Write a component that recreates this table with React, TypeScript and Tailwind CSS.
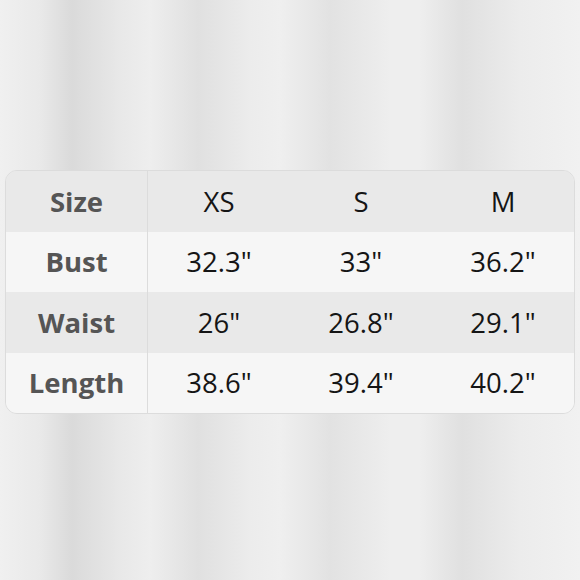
const rows = [
  { label: "Size", values: ["XS", "S", "M"] },
  { label: "Bust", values: ['32.3"', '33"', '36.2"'] },
  { label: "Waist", values: ['26"', '26.8"', '29.1"'] },
  { label: "Length", values: ['38.6"', '39.4"', '40.2"'] },
];

export default function App() {
  return (
    <div className="h-[580px] w-[580px] overflow-hidden bg-[linear-gradient(90deg,#f0f0f0_0px,#e9e9e9_40px,#dadada_72px,#e8e8e8_120px,#eeeeee_150px,#e0e0e0_198px,#ececec_250px,#efefef_280px,#e2e2e2_330px,#eeeeee_390px,#eeeeee_420px,#e0e0e0_462px,#ececec_520px,#f1f1f1_580px)] pt-[170px] font-['Open_Sans',sans-serif]">
      <div className="mx-auto w-[570px] overflow-hidden rounded-[12px] border border-[#dcdcdc]">
        {rows.map((row, i) => (
          <div
            key={row.label}
            className={`grid h-[60.5px] grid-cols-4 items-center text-[27.5px] leading-none ${i % 2 === 0 ? "bg-[#e9e9e9]" : "bg-[#f6f6f6]"}`}
          >
            <div className="flex h-full items-center justify-center border-r border-[#dcdcdc] font-bold text-[#555555]">
              {row.label}
            </div>
            {row.values.map((v) => (
              <div key={v} className="text-center text-[#151515]">
                {v}
              </div>
            ))}
          </div>
        ))}
      </div>
    </div>
  );
}
